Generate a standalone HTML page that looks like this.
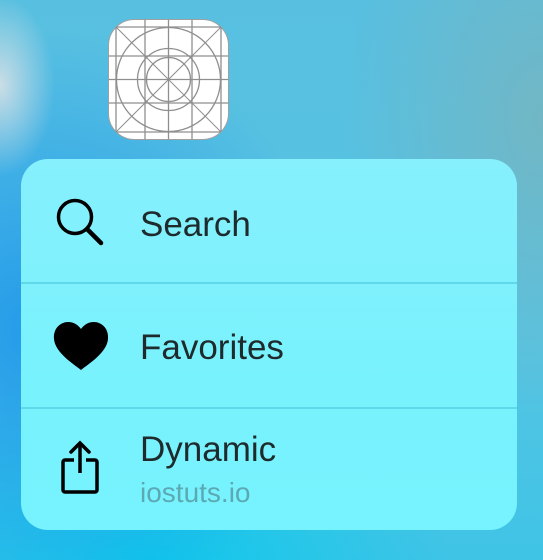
<!DOCTYPE html>
<html><head><meta charset="utf-8"><style>
html,body{margin:0;padding:0}
body{width:543px;height:560px;overflow:hidden;position:relative;font-family:"Liberation Sans",sans-serif;
background:
radial-gradient(ellipse 55px 90px at 0px 85px, rgba(225,228,230,0.85), rgba(225,228,230,0) 100%),
radial-gradient(ellipse 300px 300px at 40px 330px, rgba(30,150,235,0.9), rgba(30,150,235,0) 100%),
radial-gradient(ellipse 300px 200px at 150px 560px, rgba(15,200,235,1), rgba(15,200,235,0) 100%),
radial-gradient(ellipse 200px 300px at 543px 120px, rgba(120,180,190,0.8), rgba(120,180,190,0) 100%),
linear-gradient(180deg,#58bfe0 0%,#56c4e3 60%,#3fc4e6 100%);}
.card{position:absolute;left:21px;top:159px;width:496px;height:371px;border-radius:27px;
background:linear-gradient(180deg,#86f0fd 0%,#78f2fd 60%,#76f3fe 100%);overflow:hidden}
.sep{position:absolute;left:0;right:0;height:2px;background:#5fd9ea}
.t{position:absolute;left:119px;font-size:35px;color:#1e2a2c;line-height:1}
.s{position:absolute;left:119px;font-size:28px;color:#5ca9b3;line-height:1}
svg{position:absolute}
</style></head><body>
<svg style="left:108px;top:19px" width="121" height="121" viewBox="0 0 121 121">
<defs><clipPath id="c"><rect x="0.5" y="0.5" width="120" height="120" rx="26"/></clipPath></defs>
<rect x="0.5" y="0.5" width="120" height="120" rx="26" fill="#fff" stroke="#a0a0a0"/>
<g clip-path="url(#c)" stroke="#8f8f8f" fill="none" stroke-width="1.3">
<line x1="8" y1="0" x2="8" y2="121"/><line x1="113" y1="0" x2="113" y2="121"/>
<line x1="0" y1="8" x2="121" y2="8"/><line x1="0" y1="113" x2="121" y2="113"/>
<line x1="37" y1="0" x2="37" y2="121"/><line x1="60.5" y1="0" x2="60.5" y2="121"/><line x1="84" y1="0" x2="84" y2="121"/>
<line x1="0" y1="37" x2="121" y2="37"/><line x1="0" y1="60.5" x2="121" y2="60.5"/><line x1="0" y1="84" x2="121" y2="84"/>
<line x1="8" y1="8" x2="113" y2="113" stroke-width="1"/><line x1="113" y1="8" x2="8" y2="113" stroke-width="1"/>
<circle cx="60.5" cy="60.5" r="52"/><circle cx="60.5" cy="60.5" r="31"/><circle cx="60.5" cy="60.5" r="22"/>
</g></svg>
<div class="card">
<div class="sep" style="top:123px"></div>
<div class="sep" style="top:248px"></div>
<svg style="left:33px;top:37px" width="52" height="52" viewBox="0 0 52 52">
<circle cx="21" cy="21" r="16.5" fill="none" stroke="#000" stroke-width="3.5"/>
<line x1="33" y1="33" x2="47" y2="47" stroke="#000" stroke-width="4.5" stroke-linecap="round"/>
</svg>
<div class="t" style="top:48px">Search</div>
<svg style="left:32px;top:162px" width="56" height="50" viewBox="0 0 56 50">
<path d="M28 49 C22 44 2 32 1 18 C0 7 8 1 15 1 C21 1 25 4 28 8 C31 4 35 1 41 1 C48 1 56 7 55 18 C54 32 34 44 28 49Z" fill="#000"/>
</svg>
<div class="t" style="top:171px">Favorites</div>
<svg style="left:40px;top:280px" width="40" height="56" viewBox="0 0 40 56">
<path d="M13 21 H4 a2 2 0 0 0 -2 2 V51 a2 2 0 0 0 2 2 H34 a2 2 0 0 0 2 -2 V23 a2 2 0 0 0 -2 -2 H25" fill="none" stroke="#000" stroke-width="3.5" stroke-linejoin="round"/>
<line x1="19" y1="4" x2="19" y2="34" stroke="#000" stroke-width="3.5"/>
<path d="M10 13 L19 4 L28 13" fill="none" stroke="#000" stroke-width="3.5" stroke-linecap="round"/>
</svg>
<div class="t" style="top:273px">Dynamic</div>
<div class="s" style="top:320px">iostuts.io</div>
</div>
</body></html>
